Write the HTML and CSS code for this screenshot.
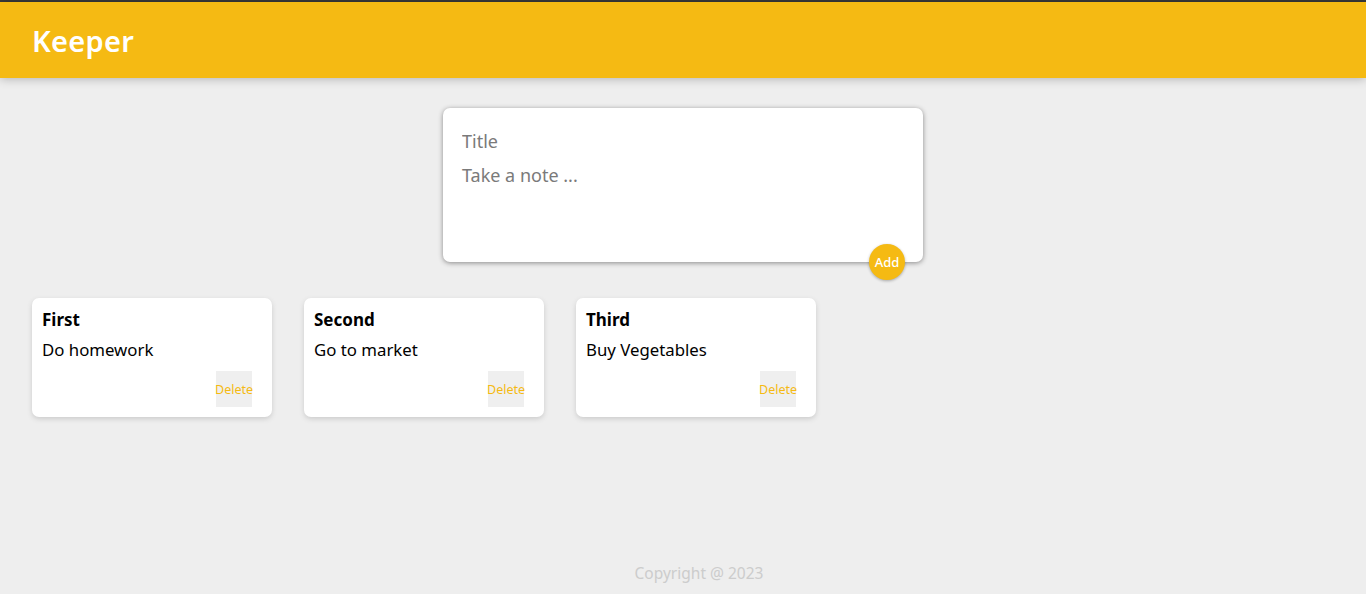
FILE: index.html
```html
<!DOCTYPE html>
<html lang="en">
<head>
<meta charset="utf-8">
<title>Keeper</title>
<link rel="stylesheet" href="styles.css">
</head>
<body>
<div class="page">
  <header class="header">
    <h1 class="logo">Keeper</h1>
  </header>
  <main class="main">
    <form class="create-note">
      <input class="field field-title" type="text" name="title" placeholder="Title">
      <textarea class="field field-content" name="content" placeholder="Take a note ..." rows="3"></textarea>
      <button class="add-btn" type="button">Add</button>
    </form>
    <div class="notes">
      <div class="note">
        <h1 class="note-title">First</h1>
        <p class="note-text">Do homework</p>
        <div class="note-actions"><button class="delete-btn" type="button">Delete</button></div>
      </div>
      <div class="note">
        <h1 class="note-title">Second</h1>
        <p class="note-text">Go to market</p>
        <div class="note-actions"><button class="delete-btn" type="button">Delete</button></div>
      </div>
      <div class="note">
        <h1 class="note-title">Third</h1>
        <p class="note-text">Buy Vegetables</p>
        <div class="note-actions"><button class="delete-btn" type="button">Delete</button></div>
      </div>
    </div>
  </main>
  <footer class="footer">
    <p class="copyright">Copyright @ 2023</p>
  </footer>
</div>
</body>
</html>
```
FILE: styles.css
```css
* {
  box-sizing: border-box;
}
html, body {
  margin: 0;
  padding: 0;
  height: 100%;
}
body {
  background: #eeeeee;
  font-family: "Noto Sans", "Open Sans", sans-serif;
  overflow: hidden;
}
.page {
  height: 594px;
  border-top: 2px solid #3b3b3b;
  display: flex;
  flex-direction: column;
}
.header {
  background-color: #f5ba13;
  padding: 17px 32px 16px;
  height: 76px;
  box-shadow: 0 0 10px 0 rgba(0, 0, 0, 0.3);
  position: relative;
  z-index: 1;
}
.logo {
  margin: 0;
  color: #ffffff;
  font-family: "Comic Sans MS", "Noto Sans", sans-serif;
  font-weight: 600;
  font-size: 29px;
  line-height: 43px;
  letter-spacing: 0.3px;
}
.main {
  flex: 1;
  padding: 0 16px;
}
.create-note {
  position: relative;
  width: 480px;
  height: 154px;
  margin: 30px auto 20px;
  background: #ffffff;
  padding: 16px 15px 15px;
  border-radius: 7px;
  box-shadow: 0 1px 5px rgb(138, 137, 137);
  display: flex;
  flex-direction: column;
}
.field {
  width: 100%;
  border: none;
  outline: none;
  padding: 4px;
  font-family: inherit;
  font-size: 18px;
  line-height: 26px;
  color: #333;
  resize: none;
  background: transparent;
}
.field::placeholder {
  color: #7a7a7a;
}
.field-title {
  height: 34px;
}
.field-content {
  flex: 1;
}
.add-btn {
  position: absolute;
  right: 18px;
  bottom: -18px;
  width: 36px;
  height: 36px;
  border: none;
  border-radius: 50%;
  background: #f5ba13;
  color: #ffffff;
  font-family: inherit;
  font-size: 13px;
  font-weight: 500;
  box-shadow: 0 1px 3px rgba(0, 0, 0, 0.3);
  padding: 0;
}
.notes {
  display: flex;
  flex-wrap: wrap;
  gap: 32px;
  padding: 16px;
}
.note {
  width: 240px;
  background: #ffffff;
  border-radius: 7px;
  box-shadow: 0 2px 5px #cccccc;
  padding: 10px;
}
.note-title {
  margin: 0 0 6px;
  font-size: 17px;
  line-height: 24px;
  font-weight: 700;
  color: #000;
}
.note-text {
  margin: 0 0 10px;
  font-size: 16.8px;
  line-height: 23px;
  color: #000;
}
.note-actions {
  display: flex;
  justify-content: flex-end;
  padding-right: 10px;
}
.delete-btn {
  width: 36px;
  height: 36px;
  border: none;
  padding: 0;
  background: #efefef;
  color: #f5ba13;
  font-family: inherit;
  font-size: 12.5px;
  display: flex;
  align-items: center;
  justify-content: center;
  overflow: visible;
  white-space: nowrap;
}
.footer {
  height: 40px;
  display: flex;
  justify-content: center;
  padding: 9px 0 0 32px;
}
.copyright {
  margin: 0;
  color: #cccccc;
  font-size: 15.5px;
  line-height: 20px;
}
```
